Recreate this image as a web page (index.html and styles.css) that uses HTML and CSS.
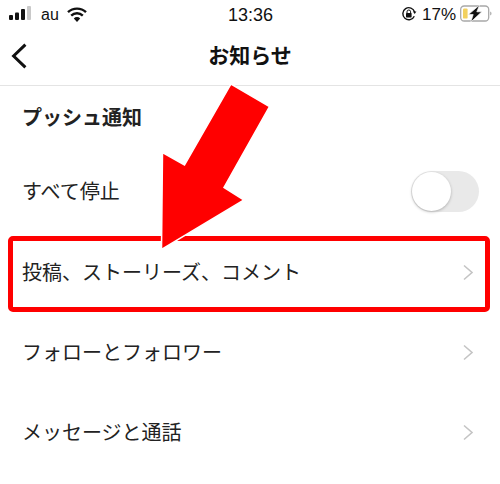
FILE: index.html
```html
<!DOCTYPE html>
<html lang="ja">
<head>
    <meta charset="UTF-8">
    <meta name="viewport" content="width=device-width, initial-scale=1.0">
    <title>お知らせ</title>
    <link rel="stylesheet" href="styles.css">
</head>
<body>
    <div class="screen">
        <!-- Status bar -->
        <div class="status-bar">
            <div class="status-left">
                <svg class="signal" width="23" height="14" viewBox="0 0 23 14">
                    <rect x="0" y="9" width="4" height="5" rx="1" fill="#111"/>
                    <rect x="6" y="6.5" width="4" height="7.5" rx="1" fill="#111"/>
                    <rect x="12" y="3" width="4" height="11" rx="1" fill="#111"/>
                    <rect x="18" y="0" width="4" height="14" rx="1" fill="#c9c9c9"/>
                </svg>
                <span class="carrier">au</span>
                <svg class="wifi" width="20" height="15" viewBox="0 0 20 15">
                    <path d="M1 5.2a13 13 0 0 1 18 0" fill="none" stroke="#111" stroke-width="2.4"/>
                    <path d="M4.2 8.6a8.4 8.4 0 0 1 11.6 0" fill="none" stroke="#111" stroke-width="2.4"/>
                    <path d="M10 15l-3.2-3.6a4.6 4.6 0 0 1 6.4 0z" fill="#111"/>
                </svg>
            </div>
            <div class="status-time">13:36</div>
            <div class="status-right">
                <svg class="status-icon" width="16" height="16" viewBox="0 0 16 16">
                    <path d="M13.3 10.2A6 6 0 1 1 13.6 6" fill="none" stroke="#111" stroke-width="1.4"/>
                    <path d="M12 5.6h3.4L13.7 8z" fill="#111"/>
                    <rect x="5" y="7" width="5.6" height="4.4" rx="0.6" fill="#111"/>
                    <path d="M6 7V5.8a1.8 1.8 0 0 1 3.6 0V7" fill="none" stroke="#111" stroke-width="1"/>
                </svg>
                <span class="percent">17%</span>
                <svg class="status-icon" width="32" height="17" viewBox="0 0 32 17">
                    <rect x="0.7" y="1" width="28" height="15" rx="3.5" fill="#fff" stroke="#a8a8a8" stroke-width="1.3"/>
                    <rect x="3" y="3.4" width="4.6" height="10.2" rx="1.2" fill="#f2d160"/>
                    <path d="M30.2 6.5v4a2 2 0 0 0 1.3-2 2 2 0 0 0-1.3-2z" fill="#a8a8a8"/>
                    <path d="M19.6 0L8.4 9.6h4.8L10.8 17l11-10.2h-5z" fill="#111" stroke="#fff" stroke-width="0.7"/>
                </svg>
            </div>
        </div>

        <!-- Nav bar -->
        <div class="nav-bar">
            <svg class="back" width="16" height="26" viewBox="0 0 16 26">
                <path d="M14.4 1.6L2.6 13l11.8 11.4" fill="none" stroke="#111" stroke-width="3"/>
            </svg>
            <h1 class="nav-title">お知らせ</h1>
        </div>

        <div class="section-title">プッシュ通知</div>

        <div class="row row-toggle">
            <span>すべて停止</span>
            <div class="toggle"><div class="knob"></div></div>
        </div>
        <div class="row">
            <span>投稿、ストーリーズ、コメント</span>
            <svg class="chevron" width="12" height="17" viewBox="0 0 12 17"><path d="M2 1.5l8 7-8 7" fill="none" stroke="#c4c4c4" stroke-width="1.6"/></svg>
        </div>
        <div class="row">
            <span>フォローとフォロワー</span>
            <svg class="chevron" width="12" height="17" viewBox="0 0 12 17"><path d="M2 1.5l8 7-8 7" fill="none" stroke="#c4c4c4" stroke-width="1.6"/></svg>
        </div>
        <div class="row">
            <span>メッセージと通話</span>
            <svg class="chevron" width="12" height="17" viewBox="0 0 12 17"><path d="M2 1.5l8 7-8 7" fill="none" stroke="#c4c4c4" stroke-width="1.6"/></svg>
        </div>

        <!-- Annotation on top of the screenshot -->
        <div class="highlight-box"></div>
        <svg class="arrow" width="500" height="484" viewBox="0 0 500 484">
            <polygon points="231,84 269.5,106.5 224,187.5 244,200 161.5,249.5 162.5,152.5 184.5,165" fill="#ff0000" stroke="#fff" stroke-width="1.5"/>
        </svg>
    </div>
</body>
</html>
```

FILE: styles.css
```css
html, body {
    margin: 0;
    padding: 0;
    background-color: #fff;
}
.screen {
    width: 500px;
    height: 484px;
    position: relative;
    overflow: hidden;
    color: #222;
    font-family: "Noto Sans CJK JP", "Liberation Sans", sans-serif;
}
.status-bar {
    height: 28px;
    padding: 2px 8px 0 9px;
    box-sizing: border-box;
    display: grid;
    grid-template-columns: 1fr auto 1fr;
    align-items: center;
    font-family: "Liberation Sans", sans-serif;
    color: #111;
}
.status-left {
    display: flex;
    align-items: center;
}
.signal {
    margin: -4px 9px 0 0;
}
.carrier {
    font-size: 16px;
    margin-right: 8px;
}
.wifi {
    margin-top: -2px;
}
.status-time {
    font-size: 18px;
}
.status-right {
    display: flex;
    align-items: center;
    justify-content: flex-end;
}
.status-icon {
    margin-top: -3px;
}
.percent {
    font-size: 17px;
    margin: 0 4px 0 5px;
}
.nav-bar {
    height: 58px;
    padding-bottom: 5px;
    display: flex;
    align-items: center;
    justify-content: center;
    position: relative;
    border-bottom: 1px solid #e4e4e4;
    box-sizing: border-box;
}
.back {
    position: absolute;
    left: 11px;
    top: 15px;
}
.nav-title {
    margin: 0;
    font-size: 21px;
    font-weight: 700;
    color: #111;
}
.section-title {
    height: 64px;
    line-height: 62px;
    padding-left: 22px;
    font-size: 20px;
    font-weight: 700;
    color: #222;
}
.row {
    height: 80px;
    padding: 0 26px 2px 22px;
    display: flex;
    align-items: center;
    justify-content: space-between;
    font-size: 20px;
    box-sizing: border-box;
}
.row-toggle {
    height: 82px;
    padding-right: 21px;
}
.chevron {
    margin-top: 2px;
}
.toggle {
    width: 68px;
    height: 41px;
    margin-top: 2px;
    border-radius: 21px;
    background-color: #e9e9e9;
    position: relative;
}
.knob {
    width: 39px;
    height: 39px;
    border-radius: 50%;
    background-color: #fff;
    box-shadow: 0 1px 3px rgba(0, 0, 0, 0.25);
    margin: 1px;
}
.highlight-box {
    position: absolute;
    left: 8px;
    top: 236px;
    width: 482px;
    height: 76px;
    box-sizing: border-box;
    border: 5px solid #ff0000;
    border-radius: 5px;
}
.arrow {
    position: absolute;
    left: 0;
    top: 0;
}
```
